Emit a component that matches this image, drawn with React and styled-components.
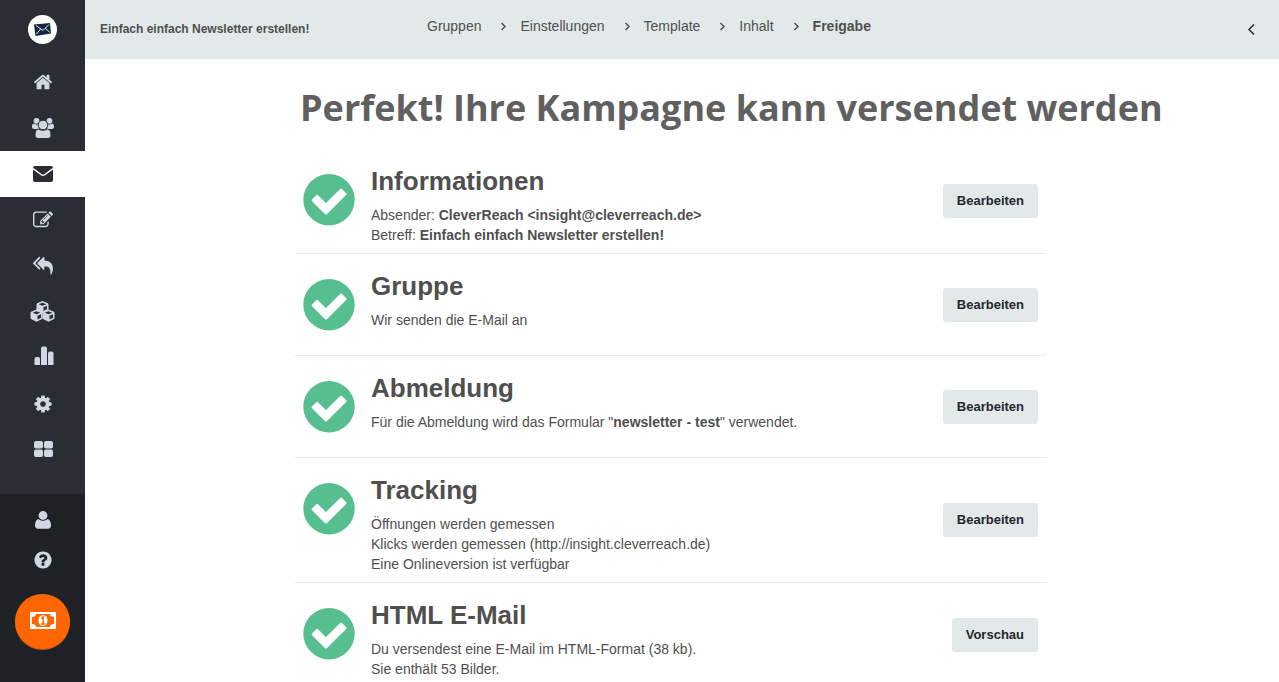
import React from "react";
import styled, { createGlobalStyle } from "styled-components";

const GlobalStyle = createGlobalStyle`
  *, *::before, *::after { box-sizing: border-box; }
  body {
    margin: 0;
    background: #fff;
    color: #4f4f4f;
    font-family: "Liberation Sans", Arial, Helvetica, sans-serif;
    font-size: 14px;
    line-height: 20px;
  }
`;

const Page = styled.div`
  display: flex;
  height: 100vh;
  overflow: hidden;
`;

const Sidebar = styled.aside`
  flex: none;
  display: flex;
  flex-direction: column;
  width: 85px;
  background: #1e2126;
`;

const MainNav = styled.nav`
  display: flex;
  flex-direction: column;
  padding-bottom: 21px;
  background: #2a2d34;
`;

const Logo = styled.a`
  display: flex;
  align-items: center;
  justify-content: center;
  height: 59px;
`;

const NavItem = styled.a`
  display: flex;
  align-items: center;
  justify-content: center;
  height: ${(p) => (p.$compact ? 40 : 46)}px;
  color: ${(p) => (p.$active ? "#2a2d34" : "#d2d8e3")};
  background: ${(p) => (p.$active ? "#fff" : "transparent")};
`;

const Icon = styled.svg`
  display: block;
  flex: none;
  width: ${(p) => p.$size}px;
  height: ${(p) => p.$size}px;
  fill: currentColor;
`;

const UserNav = styled.nav`
  display: flex;
  flex-direction: column;
  align-items: center;
  padding-top: 6px;
`;

const UpgradeButton = styled.button`
  display: flex;
  align-items: center;
  justify-content: center;
  width: 55px;
  height: 55px;
  margin-top: 14px;
  padding: 0 0 2px;
  border: 0;
  border-radius: 50%;
  background: #ff6600;
  color: #fff;
  box-shadow: 0 1px 0 #b9571a;
`;

const Content = styled.div`
  flex: 1;
  min-width: 0;
  display: flex;
  flex-direction: column;
`;

const Header = styled.header`
  flex: none;
  display: flex;
  align-items: flex-start;
  height: 59px;
  padding: 16px 20px 0 15px;
  background: #e3e9e9;
`;

const MailingName = styled.div`
  flex: none;
  width: 327px;
  padding-top: 3px;
  font-size: 12px;
  font-weight: 700;
`;

const Steps = styled.ol`
  flex: 1;
  display: flex;
  margin: 0;
  padding: 0;
  list-style: none;
`;

const Step = styled.li`
  display: flex;
  align-items: center;
  white-space: nowrap;
  font-weight: ${(p) => (p.$current ? 700 : 400)};
`;

const StepLink = styled.a`
  color: inherit;
  text-decoration: none;
`;

const StepArrow = styled.svg`
  width: 7px;
  height: 9px;
  margin: 0 13px 0 19px;
  fill: none;
  stroke: #4f4f4f;
  stroke-width: 1.5;
`;

const CollapseButton = styled.button`
  display: flex;
  padding: 8px 4px;
  border: 0;
  background: transparent;
`;

const Main = styled.main`
  flex: 1;
  min-height: 0;
  overflow-y: auto;
  scrollbar-width: none;
  padding-left: 210px;
`;

const Title = styled.h1`
  margin: 0;
  padding: 24px 0 16px 5px;
  color: #606060;
  font-family: "Open Sans", "Noto Sans", sans-serif;
  font-size: 36px;
  line-height: 50px;
  font-weight: 700;
  white-space: nowrap;
`;

const CheckList = styled.div`
  max-width: 751px;
`;

const CheckRow = styled.section`
  display: flex;
  gap: 16px;
  min-height: 102px;
  padding: 0 8px;
  border-bottom: 1px solid #ebebeb;
`;

const CheckIcon = styled(Icon)`
  margin-top: 25px;
  color: #57be8f;
`;

const CheckBody = styled.div`
  flex: 1;
  padding: 18px 0 8px;
`;

const CheckTitle = styled.h2`
  margin: 0 0 10px;
  font-size: 26px;
  line-height: 28px;
  font-weight: 700;
`;

const Line = styled.p`
  margin: 0;
`;

const ActionButton = styled.button`
  align-self: center;
  height: 34px;
  padding: 0 14px;
  border: 0;
  border-radius: 3px;
  background: #e3e9e9;
  color: #24272e;
  font: inherit;
  font-size: 13px;
  font-weight: 700;
`;

const HOME =
  "M1472 992v480q0 26-19 45t-45 19h-384v-384h-256v384h-384q-26 0-45-19t-19-45v-480q0-1 .5-3t.5-3l575-474 575 474q1 2 1 6zm223-69l-62 74q-8 9-21 11h-3q-13 0-21-7l-692-577-692 577q-12 8-24 7-13-2-21-11l-62-74q-8-10-7-23.5t11-21.5l719-599q32-26 76-26t76 26l244 204v-195q0-14 9-23t23-9h192q14 0 23 9t9 23v408l219 182q10 8 11 21.5t-7 23.5z";
const EDIT =
  "M888 1184l116-116-152-152-116 116v56h96v96h56zm440-720q-16-16-33 1l-350 350q-17 17-1 33t33-1l350-350q17-17 1-33zm80 594v190q0 119-84.5 203.5t-203.5 84.5h-832q-119 0-203.5-84.5t-84.5-203.5v-832q0-119 84.5-203.5t203.5-84.5h832q63 0 117 25 15 7 18 23 3 17-9 29l-49 49q-14 14-32 8-23-6-45-6h-832q-66 0-113 47t-47 113v832q0 66 47 113t113 47h832q66 0 113-47t47-113v-126q0-13 9-22l64-64q15-15 35-7t20 29zm-96-738l288 288-672 672h-288v-288zm444 132l-92 92-288-288 92-92q28-28 68-28t68 28l152 152q28 28 28 68t-28 68z";
const REPLY =
  "M640 1082v70q0 42-39 59-13 5-25 5-27 0-45-19l-512-512q-19-19-19-45t19-45l512-512q29-31 70-14 39 17 39 59v69l-397 398q-19 19-19 45t19 45zm1152 58q0 58-17 133.5t-38.5 138-48 125-40.5 90.5l-20 40q-8 17-28 17-6 0-9-1-25-8-23-34 43-400-106-565-64-71-170.5-110.5t-267.5-52.5v251q0 42-39 59-13 5-25 5-27 0-45-19l-512-512q-19-19-19-45t19-45l512-512q29-31 70-14 39 17 39 59v262q411 28 599 221 169 173 169 509z";
const COG =
  "M1152 896q0-106-75-181t-181-75-181 75-75 181 75 181 181 75 181-75 75-181zm512-109v222q0 12-8 23t-20 13l-185 28q-19 54-39 91 35 50 107 138 10 12 10 25t-9 23q-27 37-99 108t-94 71q-12 0-26-9l-138-108q-44 23-91 38-16 136-29 186-7 28-36 28h-222q-14 0-24.5-8.5t-11.5-21.5l-28-184q-49-16-90-37l-141 107q-10 9-25 9-14 0-25-11-126-114-165-168-7-10-7-23 0-12 8-23 15-21 51-66.5t54-70.5q-27-50-41-99l-183-27q-13-2-21-12.5t-8-23.5v-222q0-12 8-23t19-13l186-28q14-46 39-92-40-57-107-138-10-12-10-24 0-10 9-23 26-36 98.5-107.5t94.5-71.5q13 0 26 10l138 107q44-23 91-38 16-136 29-186 7-28 36-28h222q14 0 24.5 8.5t11.5 21.5l28 184q49 16 90 37l142-107q9-9 24-9 13 0 25 10 129 119 165 170 7 8 7 22 0 12-8 23-15 21-51 66.5t-54 70.5q26 50 41 98l183 28q13 2 21 12.5t8 23.5z";
const HELP =
  "M1024 1376v-192q0-14-9-23t-23-9h-192q-14 0-23 9t-9 23v192q0 14 9 23t23 9h192q14 0 23-9t9-23zm256-672q0-88-55.5-163t-138.5-116-170-41q-243 0-371 213-15 24 8 42l132 100q7 6 19 6 16 0 25-12 53-68 86-92 34-24 86-24 48 0 85.5 26t37.5 59q0 38-20 61t-68 45q-63 28-115.5 86.5t-52.5 125.5v36q0 14 9 23t23 9h192q14 0 23-9t9-23q0-19 21.5-49.5t54.5-49.5q32-18 49-28.5t46-35 44.5-48 28-60.5 12.5-81zm384 192q0 209-103 385.5t-279.5 279.5-385.5 103-385.5-103-279.5-279.5-103-385.5 103-385.5 279.5-279.5 385.5-103 385.5 103 279.5 279.5 103 385.5z";

const Glyph = ({ d, size }) => (
  <Icon $size={size} viewBox="0 0 1792 1792" aria-hidden="true">
    <path d={d} />
  </Icon>
);

const LogoMark = () => (
  <Icon $size={29} viewBox="0 0 29 29" aria-hidden="true">
    <circle cx="14.5" cy="14.5" r="14.5" fill="#fff" />
    <path d="M6 9.5 22 8l1 10.5L7.500 21z" fill="#14263c" />
    <path d="m8 10.500 7 5 6-6M8.500 19l4-5M21.500 17l-4.500-4" fill="none" stroke="#e6ebf0" strokeWidth="1" />
  </Icon>
);

const UsersIcon = () => (
  <Icon $size={22} viewBox="0 0 22 22" aria-hidden="true">
    <circle cx="4.500" cy="3.800" r="2.900" />
    <circle cx="17.500" cy="3.800" r="2.900" />
    <path d="M2 6.500c1.500 1.200 3.800 1.200 5 0v5.500H2C.7 12 0 11.300 0 10c0-2 .7-3.500 2-3.500zM20 6.500c-1.500 1.200-3.800 1.200-5 0v5.500h5c1.300 0 2-.7 2-2 0-2-.7-3.500-2-3.500z" />
    <g stroke="#2a2d34" strokeWidth="1">
      <path d="M6.500 12c2.500 1.600 6.500 1.600 9 0 2.300.2 3.500 2.500 3.500 6 0 2.200-1.200 3.500-3.200 3.500H6.200C4.200 21.500 3 20.200 3 18c0-3.500 1.200-5.800 3.500-6z" />
      <circle cx="11" cy="8" r="4.800" />
    </g>
  </Icon>
);

const UserIcon = () => (
  <Icon $size={18} viewBox="0 0 18 18" aria-hidden="true">
    <circle cx="9" cy="4.500" r="4.400" />
    <path d="M4.500 8c2.600 2.400 6.400 2.400 9 0 2.400.6 3.500 3.200 3.500 6.200 0 2.200-1.200 3.600-3 3.600H4c-1.800 0-3-1.400-3-3.600C1 11.200 2.100 8.600 4.500 8z" />
  </Icon>
);

const MailIcon = () => (
  <Icon $size={20} viewBox="0 0 20 20" aria-hidden="true">
    <rect y="2" width="20" height="16" rx="2" />
    <path d="M0 4.500 8 10.500q2 1.400 4 0L20 4.500" fill="none" stroke="#fff" strokeWidth="1.500" />
  </Icon>
);

const CUBE = "M6 0.500 11.500 2.800V9L6 11.800.500 9V2.800z";
const Cube = ({ x, y }) => (
  <g transform={`translate(${x} ${y})`}>
    <path d={CUBE} strokeLinejoin="round" stroke="currentColor" strokeWidth="1" />
    <path d="M2.200 3.200 6 1.700l3.800 1.500L6 4.800zM7 6.200l3.500-1.500v3.600L7 10z" fill="#2a2d34" />
  </g>
);
const CubesIcon = () => (
  <Icon $size={25} viewBox="0 0 25 25" aria-hidden="true">
    <Cube x={6.500} y={1} />
    <Cube x={0.500} y={9.500} />
    <Cube x={12.500} y={9.500} />
  </Icon>
);

const ChartIcon = () => (
  <Icon $size={24} viewBox="0 0 24 24" aria-hidden="true">
    <path d="M3.500 19v-6q0-2 2-2h1.500q2 0 2 2v6zM10 19V2.500q0-2 2-2h2q2 0 2 2V19zM17 19V7.500q0-2 2-2h1.500q2 0 2 2V19z" />
  </Icon>
);

const TilesIcon = () => (
  <Icon $size={20} viewBox="0 0 20 20" aria-hidden="true">
    <rect x="1" y="1" width="9" height="7.500" rx="2" />
    <rect x="11" y="1" width="9" height="7.500" rx="2" />
    <rect x="1" y="9.500" width="9" height="7.500" rx="2" />
    <rect x="11" y="9.500" width="9" height="7.500" rx="2" />
  </Icon>
);

const MoneyIcon = () => (
  <Icon $size={26} viewBox="0 0 26 26" aria-hidden="true">
    <rect y="4" width="26" height="17" />
    <path d="M6 6h14q0 3 4 3v7q-4 0-4 3H6q0-3-4-3V9q4 0 4-3z" fill="#ff6600" />
    <ellipse cx="13" cy="12.500" rx="4.500" ry="5.500" />
    <path d="M11 10.500 13.200 9v7M10.800 16h4.600" fill="none" stroke="#ff6600" strokeWidth="1.500" />
  </Icon>
);

const NAV = [
  { label: "Start", icon: <Glyph d={HOME} size={20} /> },
  { label: "Empfänger", icon: <UsersIcon /> },
  { label: "E-Mails", icon: <MailIcon />, active: true },
  { label: "Formulare", icon: <Glyph d={EDIT} size={20} /> },
  { label: "Automation", icon: <Glyph d={REPLY} size={20} /> },
  { label: "Module", icon: <CubesIcon /> },
  { label: "Reports", icon: <ChartIcon /> },
  { label: "Einstellungen", icon: <Glyph d={COG} size={20} /> },
  { label: "Apps", icon: <TilesIcon /> },
];

const STEPS = ["Gruppen", "Einstellungen", "Template", "Inhalt", "Freigabe"];

const CHECKS = [
  {
    title: "Informationen",
    action: "Bearbeiten",
    lines: [
      <>Absender: <b>CleverReach &lt;insight@cleverreach.de&gt;</b></>,
      <>Betreff: <b>Einfach einfach Newsletter erstellen!</b></>,
    ],
  },
  { title: "Gruppe", action: "Bearbeiten", lines: ["Wir senden die E-Mail an"] },
  {
    title: "Abmeldung",
    action: "Bearbeiten",
    lines: [<>Für die Abmeldung wird das Formular "<b>newsletter - test</b>" verwendet.</>],
  },
  {
    title: "Tracking",
    action: "Bearbeiten",
    lines: [
      "Öffnungen werden gemessen",
      "Klicks werden gemessen (http://insight.cleverreach.de)",
      "Eine Onlineversion ist verfügbar",
    ],
  },
  {
    title: "HTML E-Mail",
    action: "Vorschau",
    lines: ["Du versendest eine E-Mail im HTML-Format (38 kb).", "Sie enthält 53 Bilder."],
  },
];

export default function App() {
  return (
    <Page>
      <GlobalStyle />
      <Sidebar>
        <MainNav>
          <Logo href="#" aria-label="CleverReach">
            <LogoMark />
          </Logo>
          {NAV.map((item) => (
            <NavItem key={item.label} href="#" aria-label={item.label} $active={item.active}>
              {item.icon}
            </NavItem>
          ))}
        </MainNav>
        <UserNav>
          <NavItem href="#" aria-label="Konto" $compact>
            <UserIcon />
          </NavItem>
          <NavItem href="#" aria-label="Hilfe" $compact>
            <Glyph d={HELP} size={20} />
          </NavItem>
          <UpgradeButton type="button" aria-label="Tarif">
            <MoneyIcon />
          </UpgradeButton>
        </UserNav>
      </Sidebar>
      <Content>
        <Header>
          <MailingName>Einfach einfach Newsletter erstellen!</MailingName>
          <Steps>
            {STEPS.map((step, i) => (
              <Step key={step} $current={i === STEPS.length - 1}>
                {i > 0 && (
                  <StepArrow viewBox="0 0 7 9" aria-hidden="true">
                    <path d="M1.500 1 5 4.500 1.500 8" />
                  </StepArrow>
                )}
                <StepLink href="#">{step}</StepLink>
              </Step>
            ))}
          </Steps>
          <CollapseButton type="button" aria-label="Einklappen">
            <svg width="8" height="12" viewBox="0 0 8 12" fill="none" stroke="#24272e" strokeWidth="1.500">
              <path d="M7 0.500 2 5.500l5 5" />
            </svg>
          </CollapseButton>
        </Header>
        <Main>
          <Title>Perfekt! Ihre Kampagne kann versendet werden</Title>
          <CheckList>
            {CHECKS.map((check) => (
              <CheckRow key={check.title}>
                <CheckIcon $size={52} viewBox="0 0 52 52" aria-hidden="true">
                  <circle cx="26" cy="25.700" r="25.700" />
                  <path
                    d="M9.900 26.300 14.100 22.100 22.900 30.900 38.100 15.900 42.300 20.100 22.900 39.300z"
                    fill="#fff"
                    stroke="#fff"
                    strokeWidth="2.500"
                    strokeLinejoin="round"
                  />
                </CheckIcon>
                <CheckBody>
                  <CheckTitle>{check.title}</CheckTitle>
                  {check.lines.map((line, i) => (
                    <Line key={i}>{line}</Line>
                  ))}
                </CheckBody>
                <ActionButton type="button">{check.action}</ActionButton>
              </CheckRow>
            ))}
          </CheckList>
        </Main>
      </Content>
    </Page>
  );
}
